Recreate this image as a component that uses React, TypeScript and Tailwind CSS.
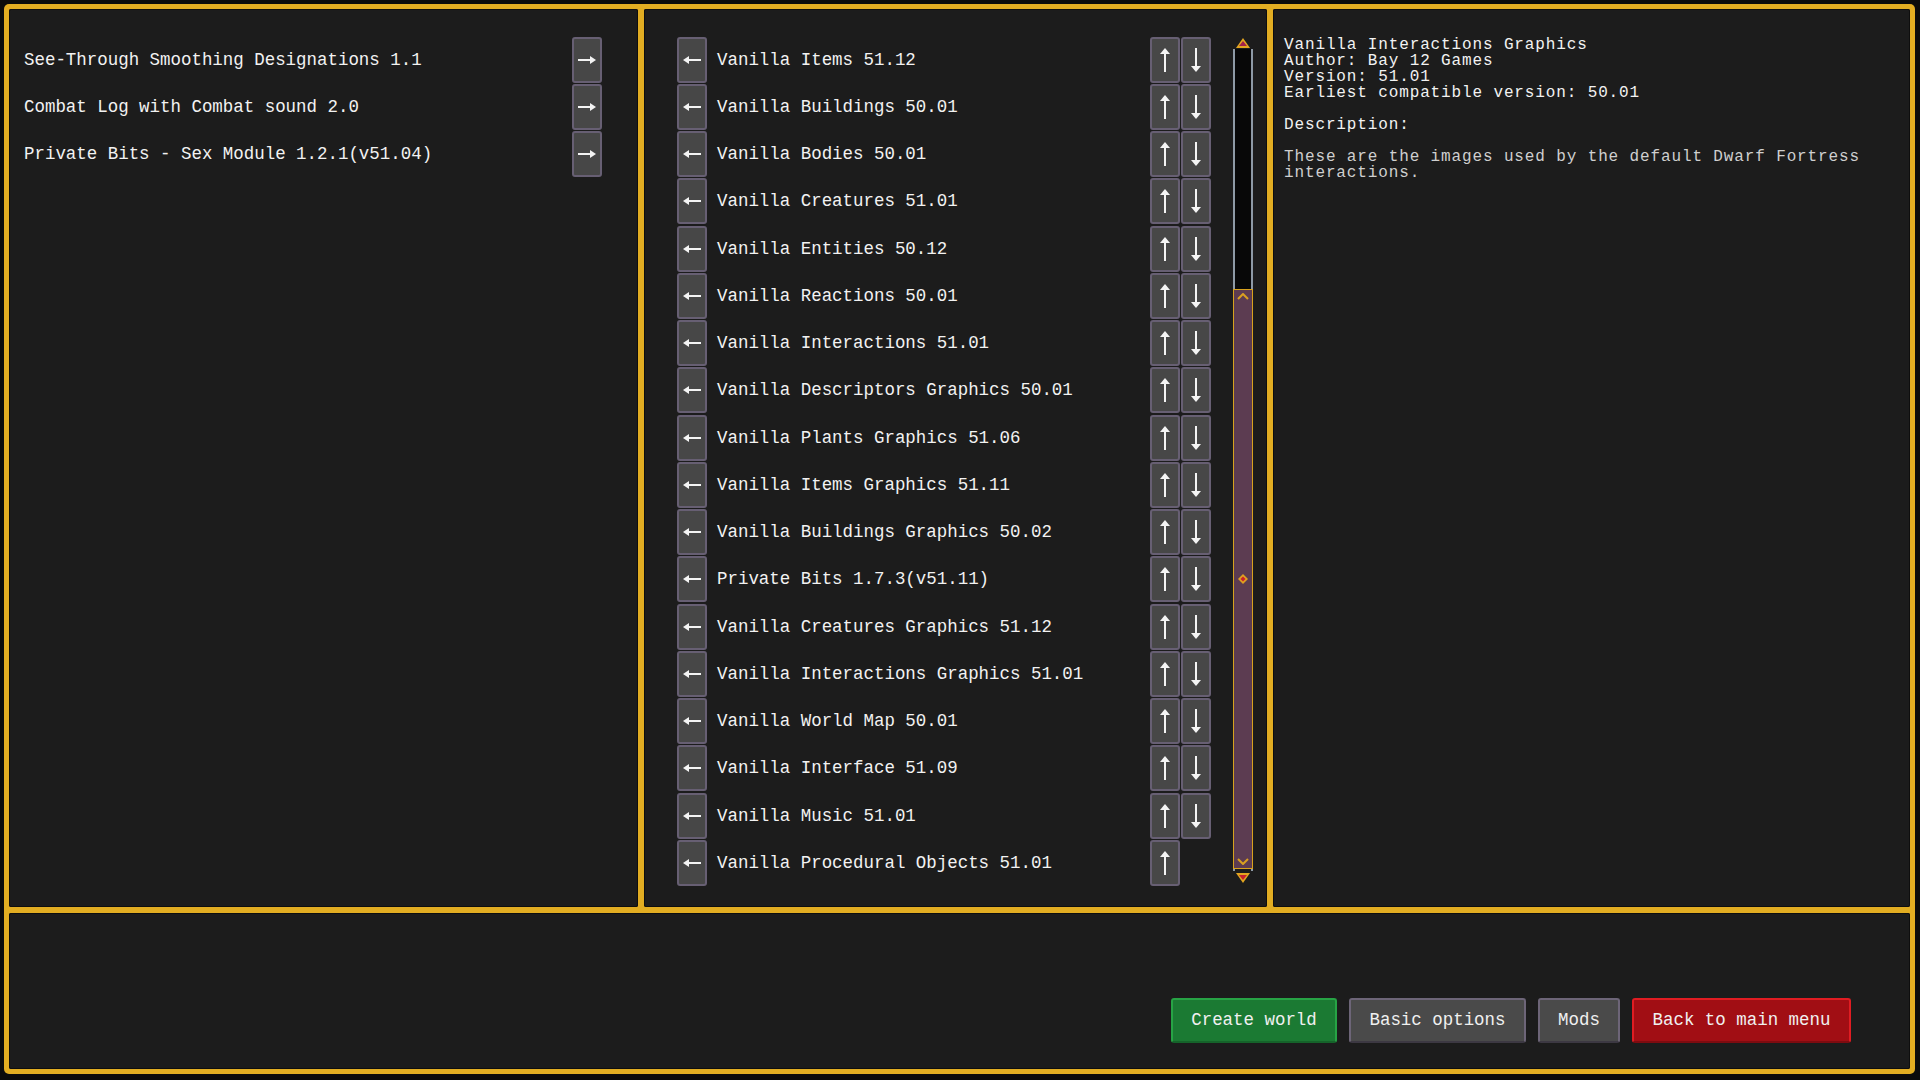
const leftMods = [
  "See-Through Smoothing Designations 1.1",
  "Combat Log with Combat sound 2.0",
  "Private Bits - Sex Module 1.2.1(v51.04)",
];

const activeMods = [
  "Vanilla Items 51.12",
  "Vanilla Buildings 50.01",
  "Vanilla Bodies 50.01",
  "Vanilla Creatures 51.01",
  "Vanilla Entities 50.12",
  "Vanilla Reactions 50.01",
  "Vanilla Interactions 51.01",
  "Vanilla Descriptors Graphics 50.01",
  "Vanilla Plants Graphics 51.06",
  "Vanilla Items Graphics 51.11",
  "Vanilla Buildings Graphics 50.02",
  "Private Bits 1.7.3(v51.11)",
  "Vanilla Creatures Graphics 51.12",
  "Vanilla Interactions Graphics 51.01",
  "Vanilla World Map 50.01",
  "Vanilla Interface 51.09",
  "Vanilla Music 51.01",
  "Vanilla Procedural Objects 51.01",
];

function ArrowLeft() {
  return (
    <svg width="18" height="10" viewBox="0 0 18 10">
      <polygon points="0,5 6,1 6,9" fill="#f4f4f4" />
      <rect x="5" y="4" width="13" height="2" fill="#f4f4f4" />
    </svg>
  );
}

function ArrowRight() {
  return (
    <svg width="18" height="10" viewBox="0 0 18 10">
      <polygon points="18,5 12,1 12,9" fill="#f4f4f4" />
      <rect x="0" y="4" width="13" height="2" fill="#f4f4f4" />
    </svg>
  );
}

function ArrowUp() {
  return (
    <svg width="10" height="24" viewBox="0 0 10 24">
      <polygon points="5,0 10,6 0,6" fill="#f4f4f4" />
      <rect x="4" y="5" width="2" height="19" fill="#f4f4f4" />
    </svg>
  );
}

function ArrowDown() {
  return (
    <svg width="10" height="24" viewBox="0 0 10 24">
      <polygon points="5,24 10,18 0,18" fill="#f4f4f4" />
      <rect x="4" y="0" width="2" height="19" fill="#f4f4f4" />
    </svg>
  );
}

function TileButton({ children }: { children: React.ReactNode }) {
  return (
    <div className="w-[30px] h-[46px] shrink-0 flex items-center justify-center bg-[#474747] border-2 border-[#675f73] rounded-[3px]">
      {children}
    </div>
  );
}

function ScrollBar() {
  return (
    <div className="w-[20px] shrink-0 pt-[29px] flex flex-col">
      <div className="h-[11px] flex items-start justify-center">
        <svg width="14" height="10" viewBox="0 0 14 10">
          <polygon points="7,0 14,10 0,10" fill="#e3a620" />
          <polygon points="7,3 11,8 3,8" fill="#a3204a" />
        </svg>
      </div>
      <div className="h-[240px] border-x-2 border-[#8e9aa6] bg-[#080808]" />
      <div className="h-[580px] border border-[#d8a21e] bg-[#5c3c51] flex flex-col items-center justify-between py-[3px]">
        <svg width="12" height="7" viewBox="0 0 12 7">
          <polyline points="1,6 6,1 11,6" fill="none" stroke="#d9a020" strokeWidth="2" />
        </svg>
        <svg width="10" height="10" viewBox="0 0 10 10">
          <polygon points="5,0 10,5 5,10 0,5" fill="#e0a020" />
          <polygon points="5,2.5 7.5,5 5,7.5 2.5,5" fill="#c8202c" />
        </svg>
        <svg width="12" height="7" viewBox="0 0 12 7">
          <polyline points="1,1 6,6 11,1" fill="none" stroke="#d9a020" strokeWidth="2" />
        </svg>
      </div>
      <div className="h-[4px] flex justify-between">
        <div className="w-[2px] h-[2px] bg-[#8e9aa6]" />
        <div className="w-[2px] h-[2px] bg-[#8e9aa6]" />
      </div>
      <div className="h-[11px] flex items-start justify-center">
        <svg width="14" height="10" viewBox="0 0 14 10">
          <polygon points="7,10 14,0 0,0" fill="#e3a620" />
          <polygon points="7,7 11,2 3,2" fill="#c8202c" />
        </svg>
      </div>
    </div>
  );
}

export default function App() {
  return (
    <div className="w-[1920px] h-[1080px] bg-[#0b0b0b] pt-[4px] pl-[4px] font-['Liberation_Mono','DejaVu_Sans_Mono',monospace] text-[17.45px] text-[#f2f2f2]">
      <div className="w-[1911px] h-[1070px] bg-[#e2ad22] rounded-[5px] p-[5px] flex flex-col gap-[6px]">
        <div className="h-[898px] flex gap-[6px]">
          {/* available mods */}
          <div className="w-[629px] bg-[#1c1c1c] rounded-[2px] shadow-[inset_0_0_0_1px_#0e0e0e] pt-[27px] pl-[15px] pr-[36px]">
            {leftMods.map((m) => (
              <div key={m} className="h-[47.25px] flex items-center justify-between">
                <span className="whitespace-pre">{m}</span>
                <TileButton>
                  <ArrowRight />
                </TileButton>
              </div>
            ))}
          </div>

          {/* active mods */}
          <div className="w-[623px] bg-[#1c1c1c] rounded-[2px] shadow-[inset_0_0_0_1px_#0e0e0e] pl-[33px] pr-[14px] flex gap-[22px]">
            <div className="w-[534px] pt-[27px]">
              {activeMods.map((m, i) => (
                <div key={m} className="h-[47.25px] flex items-center">
                  <TileButton>
                    <ArrowLeft />
                  </TileButton>
                  <span className="ml-[10px] flex-1 whitespace-pre">{m}</span>
                  <div className="flex gap-[1px]">
                    <TileButton>
                      <ArrowUp />
                    </TileButton>
                    {i < activeMods.length - 1 ? (
                      <TileButton>
                        <ArrowDown />
                      </TileButton>
                    ) : (
                      <div className="w-[30px]" />
                    )}
                  </div>
                </div>
              ))}
            </div>
            <ScrollBar />
          </div>

          {/* details */}
          <div className="flex-1 bg-[#1c1c1c] rounded-[2px] shadow-[inset_0_0_0_1px_#0e0e0e] pt-[28px] pl-[11px] text-[16px] tracking-[0.87px] leading-[16px] whitespace-pre">
            <div>Vanilla Interactions Graphics</div>
            <div>Author: Bay 12 Games</div>
            <div>Version: 51.01</div>
            <div>Earliest compatible version: 50.01</div>
            <div className="h-[16px]" />
            <div>Description:</div>
            <div className="h-[16px]" />
            <div className="text-[#cfcfcf]">These are the images used by the default Dwarf Fortress</div>
            <div className="text-[#cfcfcf]">interactions.</div>
          </div>
        </div>

        {/* bottom bar */}
        <div className="flex-1 bg-[#1c1c1c] rounded-[2px] shadow-[inset_0_0_0_1px_#0e0e0e] flex items-end justify-end gap-[12px] pr-[59px] pb-[26px]">
          <button className="w-[166px] h-[45px] bg-[#1b7a33] border-2 border-[#27a345] border-b-[#15632a] rounded-[3px] text-[#f0f0f0]">
            Create world
          </button>
          <button className="w-[177px] h-[45px] bg-[#4a4a4a] border-2 border-[#6d6578] border-b-[#3c3842] rounded-[3px] text-[#f0f0f0]">
            Basic options
          </button>
          <button className="w-[82px] h-[45px] bg-[#4a4a4a] border-2 border-[#6d6578] border-b-[#3c3842] rounded-[3px] text-[#f0f0f0]">
            Mods
          </button>
          <button className="w-[219px] h-[45px] bg-[#a10e14] border-2 border-[#e01c22] border-b-[#7e0b10] rounded-[3px] text-[#f0f0f0]">
            Back to main menu
          </button>
        </div>
      </div>
    </div>
  );
}
